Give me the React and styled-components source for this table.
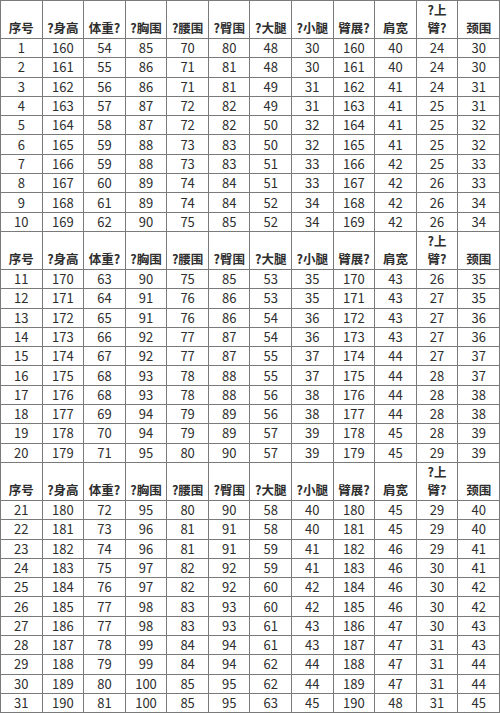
import styled, { createGlobalStyle } from 'styled-components';

const GlobalStyle = createGlobalStyle`
  html, body {
    margin: 0;
    padding: 0;
    background: #ffffff;
  }
`;

const Sheet = styled.table`
  width: 500px;
  table-layout: fixed;
  border-collapse: collapse;
  font-family: 'Noto Sans CJK SC', 'Noto Sans', sans-serif;
  font-size: 13px;
  color: #2e2e2e;
`;

const HeadRow = styled.tr`
  height: 38px;
`;

const HeadCell = styled.td`
  border: 1px solid #7a7a7a;
  padding: 0 0 1px;
  text-align: center;
  vertical-align: bottom;
  font-weight: bold;
  font-size: 12.5px;
  line-height: 18px;
  white-space: nowrap;
`;

const DataRow = styled.tr`
  height: 19.3px;
`;

const DataCell = styled.td`
  border: 1px solid #7a7a7a;
  padding: 0;
  text-align: center;
  vertical-align: middle;
  line-height: 16px;
`;

const headers = [
  '序号',
  '?身高',
  '体重?',
  '?胸围',
  '?腰围',
  '?臀围',
  '?大腿',
  '?小腿',
  '臂展?',
  '肩宽',
  ['?上', '臂?'],
  '颈围',
];

const rows = [
  [1, 160, 54, 85, 70, 80, 48, 30, 160, 40, 24, 30],
  [2, 161, 55, 86, 71, 81, 48, 30, 161, 40, 24, 30],
  [3, 162, 56, 86, 71, 81, 49, 31, 162, 41, 24, 31],
  [4, 163, 57, 87, 72, 82, 49, 31, 163, 41, 25, 31],
  [5, 164, 58, 87, 72, 82, 50, 32, 164, 41, 25, 32],
  [6, 165, 59, 88, 73, 83, 50, 32, 165, 41, 25, 32],
  [7, 166, 59, 88, 73, 83, 51, 33, 166, 42, 25, 33],
  [8, 167, 60, 89, 74, 84, 51, 33, 167, 42, 26, 33],
  [9, 168, 61, 89, 74, 84, 52, 34, 168, 42, 26, 34],
  [10, 169, 62, 90, 75, 85, 52, 34, 169, 42, 26, 34],
  [11, 170, 63, 90, 75, 85, 53, 35, 170, 43, 26, 35],
  [12, 171, 64, 91, 76, 86, 53, 35, 171, 43, 27, 35],
  [13, 172, 65, 91, 76, 86, 54, 36, 172, 43, 27, 36],
  [14, 173, 66, 92, 77, 87, 54, 36, 173, 43, 27, 36],
  [15, 174, 67, 92, 77, 87, 55, 37, 174, 44, 27, 37],
  [16, 175, 68, 93, 78, 88, 55, 37, 175, 44, 28, 37],
  [17, 176, 68, 93, 78, 88, 56, 38, 176, 44, 28, 38],
  [18, 177, 69, 94, 79, 89, 56, 38, 177, 44, 28, 38],
  [19, 178, 70, 94, 79, 89, 57, 39, 178, 45, 28, 39],
  [20, 179, 71, 95, 80, 90, 57, 39, 179, 45, 29, 39],
  [21, 180, 72, 95, 80, 90, 58, 40, 180, 45, 29, 40],
  [22, 181, 73, 96, 81, 91, 58, 40, 181, 45, 29, 40],
  [23, 182, 74, 96, 81, 91, 59, 41, 182, 46, 29, 41],
  [24, 183, 75, 97, 82, 92, 59, 41, 183, 46, 30, 41],
  [25, 184, 76, 97, 82, 92, 60, 42, 184, 46, 30, 42],
  [26, 185, 77, 98, 83, 93, 60, 42, 185, 46, 30, 42],
  [27, 186, 77, 98, 83, 93, 61, 43, 186, 47, 30, 43],
  [28, 187, 78, 99, 84, 94, 61, 43, 187, 47, 31, 43],
  [29, 188, 79, 99, 84, 94, 62, 44, 188, 47, 31, 44],
  [30, 189, 80, 100, 85, 95, 62, 44, 189, 47, 31, 44],
  [31, 190, 81, 100, 85, 95, 63, 45, 190, 48, 31, 45],
];

// a header row sits in front of rows 1, 11 and 21
const blocks = [rows.slice(0, 10), rows.slice(10, 20), rows.slice(20)];

const Header = ({ id }) => (
  <HeadRow>
    {headers.map((h, i) => (
      <HeadCell key={`${id}-${i}`}>
        {Array.isArray(h) ? (
          <>
            {h[0]}
            <br />
            {h[1]}
          </>
        ) : (
          h
        )}
      </HeadCell>
    ))}
  </HeadRow>
);

const App = () => (
  <>
    <GlobalStyle />
    <Sheet>
      <tbody>
        {blocks.map((block, b) => [
          <Header key={`h${b}`} id={b} />,
          ...block.map((row) => (
            <DataRow key={row[0]}>
              {row.map((v, i) => (
                <DataCell key={i}>{v}</DataCell>
              ))}
            </DataRow>
          )),
        ])}
      </tbody>
    </Sheet>
  </>
);

export default App;
